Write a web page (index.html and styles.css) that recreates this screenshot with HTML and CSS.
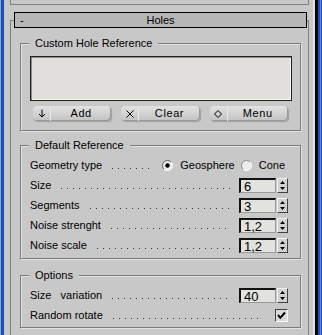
FILE: index.html
```html
<!DOCTYPE html>
<html lang="en">
<head>
    <meta charset="UTF-8">
    <meta name="viewport" content="width=device-width, initial-scale=1.0">
    <title>Holes</title>

    <link rel="stylesheet" href="styles.css">
</head>
<body>

    <div id="pantalla">

        <div class="bordeIzq"></div>

        <div id="panel">

            <div class="rolloutAnterior"></div>

            <div class="rollout">

                <div class="rolloutCabecera">
                    <span class="plegar">-</span>
                    <span class="rolloutTitulo">Holes</span>
                    <span></span>
                </div>

                <!-- grupo 1 -->
                <div class="grupo grupoCustom">
                    <div class="grupoTitulo">Custom Hole Reference</div>

                    <div class="lista"></div>

                    <div class="filaBotones">
                        <button class="boton">
                            <span class="botonIcono">
                                <svg width="8" height="9" viewBox="0 0 8 9"><path d="M4 0.5 V8 M1 5 L4 8 L7 5" stroke="#000" fill="none"/></svg>
                            </span>
                            <span class="botonTexto">Add</span>
                        </button>
                        <button class="boton">
                            <span class="botonIcono">
                                <svg width="8" height="8" viewBox="0 0 8 8"><path d="M0.5 0.5 L7.5 7.5 M7.5 0.5 L0.5 7.5" stroke="#000" fill="none"/></svg>
                            </span>
                            <span class="botonTexto">Clear</span>
                        </button>
                        <button class="boton">
                            <span class="botonIcono">
                                <svg width="8" height="8" viewBox="0 0 8 8"><path d="M4 0.5 L7.5 4 L4 7.5 L0.5 4 Z" stroke="#000" fill="none"/></svg>
                            </span>
                            <span class="botonTexto">Menu</span>
                        </button>
                    </div>
                </div>

                <!-- grupo 2 -->
                <div class="grupo grupoDefault">
                    <div class="grupoTitulo">Default Reference</div>

                    <div class="filas">

                        <div class="fila">
                            <span>Geometry type</span>
                            <span class="puntos puntosCortos"></span>
                            <span class="radio">
                                <svg width="11" height="11" viewBox="0 0 11 11">
                                    <circle cx="5.5" cy="5.5" r="5" fill="#ececec"/>
                                    <path d="M1.96 9.04 A5 5 0 0 1 9.04 1.96" stroke="#5a5a5a" fill="none"/>
                                    <path d="M9.04 1.96 A5 5 0 0 1 1.96 9.04" stroke="#fff" fill="none"/>
                                    <circle cx="5.5" cy="5.5" r="2.2" fill="#000"/>
                                </svg>
                            </span>
                            <span class="radioTexto">Geosphere</span>
                            <span class="radio">
                                <svg width="11" height="11" viewBox="0 0 11 11">
                                    <circle cx="5.5" cy="5.5" r="5" fill="#ececec"/>
                                    <path d="M1.96 9.04 A5 5 0 0 1 9.04 1.96" stroke="#8a8a8a" fill="none"/>
                                    <path d="M9.04 1.96 A5 5 0 0 1 1.96 9.04" stroke="#fff" fill="none"/>
                                </svg>
                            </span>
                            <span class="radioTexto radioUltimo">Cone</span>
                        </div>

                        <div class="fila">
                            <span>Size</span>
                            <span class="puntos"></span>
                            <span class="campo">6</span>
                            <span class="spinner"><svg width="9" height="13" viewBox="0 0 9 13"><path d="M2 5 L4.5 2 L7 5 Z M2 8 L7 8 L4.5 11 Z" fill="#000"/></svg></span>
                        </div>

                        <div class="fila">
                            <span>Segments</span>
                            <span class="puntos"></span>
                            <span class="campo">3</span>
                            <span class="spinner"><svg width="9" height="13" viewBox="0 0 9 13"><path d="M2 5 L4.5 2 L7 5 Z M2 8 L7 8 L4.5 11 Z" fill="#000"/></svg></span>
                        </div>

                        <div class="fila">
                            <span>Noise strenght</span>
                            <span class="puntos"></span>
                            <span class="campo">1,2</span>
                            <span class="spinner"><svg width="9" height="13" viewBox="0 0 9 13"><path d="M2 5 L4.5 2 L7 5 Z M2 8 L7 8 L4.5 11 Z" fill="#000"/></svg></span>
                        </div>

                        <div class="fila">
                            <span>Noise scale</span>
                            <span class="puntos"></span>
                            <span class="campo">1,2</span>
                            <span class="spinner"><svg width="9" height="13" viewBox="0 0 9 13"><path d="M2 5 L4.5 2 L7 5 Z M2 8 L7 8 L4.5 11 Z" fill="#000"/></svg></span>
                        </div>

                    </div>
                </div>

                <!-- grupo 3 -->
                <div class="grupo grupoOpciones">
                    <div class="grupoTitulo">Options</div>

                    <div class="filas">

                        <div class="fila">
                            <span>Size&nbsp;&nbsp; variation</span>
                            <span class="puntos"></span>
                            <span class="campo">40</span>
                            <span class="spinner"><svg width="9" height="13" viewBox="0 0 9 13"><path d="M2 5 L4.5 2 L7 5 Z M2 8 L7 8 L4.5 11 Z" fill="#000"/></svg></span>
                        </div>

                        <div class="fila">
                            <span>Random rotate</span>
                            <span class="puntos puntosCheck"></span>
                            <span class="check"><svg width="11" height="11" viewBox="0 0 11 11"><path d="M2 5 L4.3 7.8 L9 2.5" stroke="#000" stroke-width="2" fill="none"/></svg></span>
                        </div>

                    </div>
                </div>

            </div>

        </div>

        <div class="bordeDer"></div>

    </div>

</body>
</html>
```

FILE: styles.css
```css
body{
    margin: 0;
    font-family: "Liberation Sans", Arial, sans-serif;
    font-size: 11px;
    color: #000;
}

#pantalla{
    display: flex;
    height: 335px;
    overflow: hidden;
    background-color: #c8c8c8;
}

.bordeIzq{
    width: 4px;
    background: linear-gradient(to right, #8da2cc 1px, #1f4fbd 1px);
}

.bordeDer{
    width: 9px;
    background: linear-gradient(to right, #e4e4e4 0 2px, #000 2px 5px, #1f4fbd 5px 7px, #5a86e0 7px 8px, #1f4fbd 8px);
}

#panel{
    flex: 1;
}

.rolloutAnterior{
    height: 4px;
    margin: 0 4px 0 6px;
    border: 1px solid #808080;
    border-top: none;
}

.rollout{
    margin: 15px 4px 0 6px;
    border: 1px solid #808080;
    border-bottom: none;
    height: 400px;
}

.rolloutCabecera{
    display: grid;
    grid-template-columns: 1fr auto 1fr;
    height: 14px;
    line-height: 14px;
    margin: -9px 1px 0 3px;
    border: 1px solid #000;
    background-color: #b6b6b6;
    font-size: 11px;
}

.plegar{
    padding-left: 5px;
}

.grupo{
    margin: 15px 7px 0 9px;
    border: 1px solid #7c7c7c;
    box-shadow: 1px 1px 0 #e2e2e2, inset 1px 1px 0 #e2e2e2;
}

.grupoDefault{
    margin-top: 14px;
    padding-bottom: 3px;
}

.grupoOpciones{
    margin-top: 16px;
    padding-bottom: 2px;
}

.grupoTitulo{
    display: table;
    margin: -7px 0 0 8px;
    padding: 0 6px;
    line-height: 13px;
    background-color: #c8c8c8;
}

.lista{
    height: 43px;
    margin: 6px 8px 0 9px;
    border: 1px solid #222;
    background-color: #e0dfdb;
    box-shadow: inset 1px 1px 0 #8a8a8a, inset -1px -1px 0 #f6f6f6;
}

.filaBotones{
    display: grid;
    grid-template-columns: repeat(3, 1fr);
    gap: 10px;
    margin-top: 5px;
    padding: 0 12px 9px 12px;
}

.boton{
    display: flex;
    height: 15px;
    padding: 0;
    border: none;
    border-radius: 4px;
    background: linear-gradient(#e2e2e2, #c2c2c2);
    box-shadow: inset -1px -1px 0 #9a9a9a, 1px 1px 1px #a0a0a0;
    font-family: inherit;
    font-size: 11px;
    color: #000;
}

.botonIcono{
    width: 17px;
    display: flex;
    align-items: center;
    justify-content: center;
    border-right: 1px solid #e8e8e8;
}

.botonTexto{
    flex: 1;
    line-height: 15px;
    letter-spacing: 0.6px;
}

.filas{
    margin-top: 3px;
}

.fila{
    display: flex;
    align-items: center;
    height: 20px;
    padding: 0 12px 0 9px;
}

.puntos{
    flex: 1;
    align-self: stretch;
    margin: 0 8px 0 10px;
    background-image: linear-gradient(to right, #333 1px, transparent 1px);
    background-size: 6px 1px;
    background-repeat: repeat-x;
    background-position: 0 13px;
}

.puntosCortos{
    margin: 0 12px 0 10px;
}

.puntosCheck{
    margin-right: 13px;
}

.radio{
    display: flex;
}

.radioTexto{
    margin: 0 6px 0 7px;
}

.radioUltimo{
    margin-right: 3px;
}

.campo{
    width: 31px;
    height: 12px;
    line-height: 13px;
    padding-left: 3px;
    border-top: 2px solid #111;
    border-left: 2px solid #111;
    border-right: 1px solid #9a9a9a;
    border-bottom: 1px solid #9a9a9a;
    background-color: #e2e2de;
    font-size: 13px;
}

.spinner{
    display: flex;
    width: 9px;
    height: 13px;
    margin-left: 1px;
    border: 1px solid;
    border-color: #f4f4f4 #404040 #404040 #f4f4f4;
    background-color: #d2d2d2;
}

.check{
    display: flex;
    width: 11px;
    height: 11px;
    border: 1px solid;
    border-color: #404040 #fafafa #fafafa #404040;
    background-color: #dadada;
}
```
